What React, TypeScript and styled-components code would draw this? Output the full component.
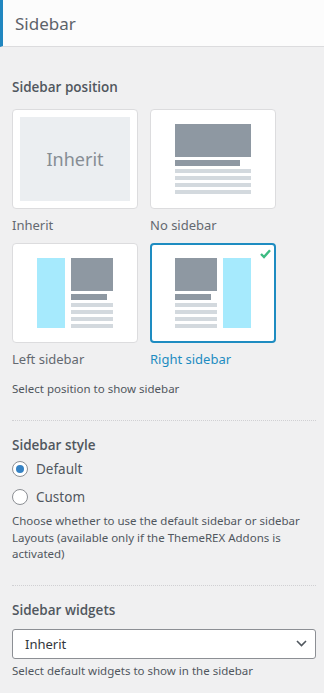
import React from "react"
import styled, { createGlobalStyle } from "styled-components"

type Side = "none" | "left" | "right"

interface Choice {
  id: string
  label: string
  side?: Side
}

const positions: Choice[] = [
  { id: "inherit", label: "Inherit" },
  { id: "none", label: "No sidebar", side: "none" },
  { id: "left", label: "Left sidebar", side: "left" },
  { id: "right", label: "Right sidebar", side: "right" },
]

function Preview(props: { side: Side }) {
  const content = (
    <Content>
      <Picture />
      <TitleBar />
      <TextLine />
      <TextLine />
      <TextLine />
      <TextLine />
    </Content>
  )

  return (
    <Mock>
      {props.side === "left" && <SideBox />}
      {content}
      {props.side === "right" && <SideBox />}
    </Mock>
  )
}

function Check() {
  return (
    <CheckMark width="11" height="10" viewBox="0 0 11 10">
      <path d="M1 5 L4 8 L10 1.3" fill="none" stroke="#3cbb82" strokeWidth="2.4" />
    </CheckMark>
  )
}

export default function App() {
  const selected = "right"

  return (
    <>
      <GlobalStyle />
      <Header>Sidebar</Header>
      <Panel>
        <Section>
          <Heading>Sidebar position</Heading>
          <Choices>
            {positions.map((item) => (
              <Option key={item.id}>
                <Card active={item.id === selected}>
                  {item.side ? <Preview side={item.side} /> : <InheritBox>Inherit</InheritBox>}
                  {item.id === selected && <Check />}
                </Card>
                <OptionLabel active={item.id === selected}>{item.label}</OptionLabel>
              </Option>
            ))}
          </Choices>
          <Help space={11}>Select position to show sidebar</Help>
        </Section>

        <Section>
          <Heading>Sidebar style</Heading>
          <RadioRow>
            <Radio checked />
            Default
          </RadioRow>
          <RadioRow>
            <Radio />
            Custom
          </RadioRow>
          <Description>
            Choose whether to use the default sidebar or sidebar Layouts (available only if the
            ThemeREX Addons is activated)
          </Description>
        </Section>

        <Section>
          <Heading>Sidebar widgets</Heading>
          <Select>
            <span>Inherit</span>
            <svg width="11" height="7" viewBox="0 0 11 7">
              <path d="M1 1 L5.5 5.5 L10 1" fill="none" stroke="#50575e" strokeWidth="1.6" />
            </svg>
          </Select>
          <Help space={3}>Select default widgets to show in the sidebar</Help>
        </Section>
      </Panel>
    </>
  )
}

const GlobalStyle = createGlobalStyle`
  body {
    margin: 0;
    background: #f0f0f1;
    font-family: "Segoe UI", "Noto Sans", sans-serif;
    color: #50575e;
  }
`

const Header = styled.div`
  height: 46px;
  display: flex;
  align-items: center;
  padding-left: 12px;
  background: #fcfcfc;
  border-left: 3px solid #2187c0;
  border-bottom: 1px solid #dcdcde;
  font-size: 17px;
  color: #5c636a;
`

const Panel = styled.div`
  padding: 16px 8px 0 12px;
`

const Section = styled.div`
  padding: 14px 0 22px;

  & + & {
    border-top: 1px dotted #d0d0d3;
  }
`

const Heading = styled.div`
  font-family: "Open Sans", "Noto Sans", sans-serif;
  font-size: 13.5px;
  font-weight: 600;
  line-height: 20px;
`

const Choices = styled.div`
  display: grid;
  grid-template-columns: 126px 126px;
  column-gap: 12px;
  row-gap: 8px;
  margin-top: 12px;
`

const Option = styled.div`
  display: flex;
  flex-direction: column;
`

const Card = styled.div<{ active?: boolean }>`
  position: relative;
  box-sizing: border-box;
  height: 100px;
  padding: 7px;
  display: flex;
  align-items: center;
  justify-content: center;
  background: #fff;
  border: ${(p) => (p.active ? "2px solid #1e8cc1" : "1px solid #dcdcde")};
  border-radius: 4px;
`

const OptionLabel = styled.div<{ active?: boolean }>`
  margin-top: 6px;
  font-size: 13px;
  line-height: 20px;
  color: ${(p) => (p.active ? "#1e8cc1" : "#646970")};
`

const InheritBox = styled.div`
  align-self: stretch;
  flex: 1;
  display: flex;
  align-items: center;
  justify-content: center;
  background: #ebeef1;
  font-size: 18px;
  color: #868d94;
`

const Mock = styled.div`
  width: 76px;
  height: 70px;
  display: flex;
  gap: 6px;
`

const SideBox = styled.div`
  width: 28px;
  background: #a6eafd;
`

const Content = styled.div`
  flex: 1;
  display: flex;
  flex-direction: column;
  gap: 3px;
`

const Picture = styled.div`
  height: 33px;
  background: #8e98a2;
`

const TitleBar = styled.div`
  width: 85%;
  height: 6px;
  background: #8e98a2;
`

const TextLine = styled.div`
  height: 4px;
  background: #d3d9de;
`

const CheckMark = styled.svg`
  position: absolute;
  top: 4px;
  right: 3px;
`

const Help = styled.div<{ space: number }>`
  margin-top: ${(p) => p.space}px;
  font-size: 11.5px;
  line-height: 18px;
`

const RadioRow = styled.label`
  display: flex;
  align-items: center;
  gap: 8px;
  height: 28px;
  font-size: 13.5px;
`

const Radio = styled.span<{ checked?: boolean }>`
  box-sizing: border-box;
  width: 16px;
  height: 16px;
  border: 1px solid #8c8f94;
  border-radius: 50%;
  background: #fff;
  display: flex;
  align-items: center;
  justify-content: center;

  &::after {
    content: "";
    display: ${(p) => (p.checked ? "block" : "none")};
    width: 8px;
    height: 8px;
    border-radius: 50%;
    background: #3582c4;
  }
`

const Description = styled.div`
  margin-top: 2px;
  font-size: 11.5px;
  line-height: 16.5px;
`

const Select = styled.div`
  box-sizing: border-box;
  height: 30px;
  margin-top: 9px;
  padding: 0 8px 0 12px;
  display: flex;
  align-items: center;
  justify-content: space-between;
  background: #fff;
  border: 1px solid #8c8f94;
  border-radius: 3px;
  font-size: 13px;
  color: #32373c;
`
